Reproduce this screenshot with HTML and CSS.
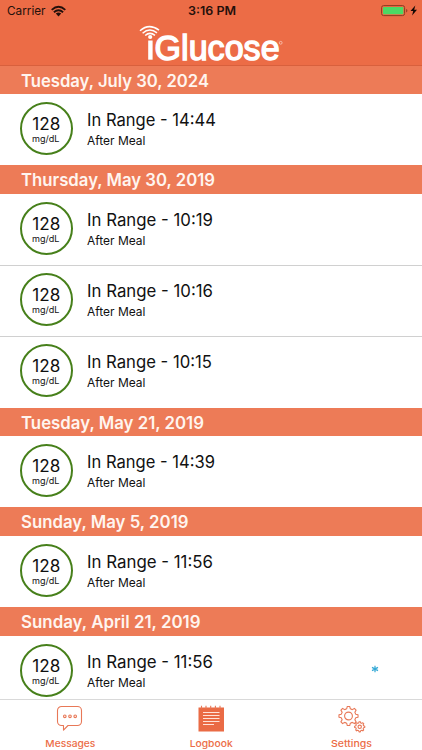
FILE: index.html
```html
<!DOCTYPE html>
<html lang="en">
<head>
<meta charset="utf-8">
<title>iGlucose Logbook</title>
<link rel="stylesheet" href="styles.css">
</head>
<body>
<div class="app">
  <header class="top">
    <div class="status">
      <div class="carrier"><svg class="carrier-text" width="41" height="16"><text x="0" y="12.3" textLength="38.5" lengthAdjust="spacingAndGlyphs">Carrier</text></svg>
        <svg class="wifi" width="15" height="11" viewBox="0 0 15 11"><path d="M.7 3.9Q7.5-2.2 14.3 3.9M2.9 6.2Q7.5 2.2 12.1 6.2" fill="none" stroke="#24100b" stroke-width="1.9"/><path d="M4.8 7.6Q7.5 5.5 10.2 7.6L7.5 10.4Z" fill="#24100b"/></svg>
      </div>
      <svg class="time" width="48" height="16"><text x="0" y="12.3" textLength="48" lengthAdjust="spacingAndGlyphs">3:16 PM</text></svg>
      <svg class="battery" width="38" height="12" viewBox="0 0 38 12"><rect x=".6" y=".6" width="23" height="10" rx="2" fill="none" stroke="#8c3c22"/><rect x="2" y="2" width="20.3" height="7.3" rx=".8" fill="#4cd964"/><path d="M25.2 4q1.2.4 1.2 1.7t-1.2 1.7z" fill="#8c3c22"/><path d="M34.300.6l-4.800 5.500h2.700l-1.100 4.500 4.900-5.800h-2.800z" fill="#110704"/></svg>
    </div>
    <svg class="logo" width="144" height="38" viewBox="0 0 144 38"><g fill="none" stroke="#fff" stroke-width="1.5"><path d="M1 5.700Q10-2.200 20 5.200M3.600 8.200Q10.500 2 18 7.800M6.200 10.500Q10.700 6.300 16 10.300"/></g><circle cx="11.200" cy="12" r="2.100" fill="#fff"/><rect x="9.200" y="15.500" width="4.400" height="19.200" fill="#fff"/><text class="brand" x="15.600" y="34.500" textLength="125" lengthAdjust="spacingAndGlyphs">Glucose</text><circle cx="141.700" cy="17.800" r="1.400" fill="none" stroke="#f9c9b9" stroke-width=".8"/></svg>
  </header>
  <main class="log" id="log"></main>
  <nav class="tabs">
    <a class="tab"><svg width="28" height="28" viewBox="0 0 28 28"><path d="M5.500 1.500h16a4 4 0 0 1 4 4v11a4 4 0 0 1-4 4H12l-4.500 4.700v-4.700h-2a4 4 0 0 1-4-4v-11a4 4 0 0 1 4-4z" class="line"/><g class="line"><circle cx="8.800" cy="11.300" r="1.300"/><circle cx="14" cy="11.300" r="1.300"/><circle cx="19.200" cy="11.300" r="1.300"/></g></svg>
      <svg class="label" width="70" height="16"><text x="35.300" y="12" text-anchor="middle" textLength="50" lengthAdjust="spacingAndGlyphs">Messages</text></svg></a>
    <a class="tab"><svg width="28" height="28" viewBox="0 0 28 28"><rect x="1.500" y="2.500" width="25.500" height="24" fill="#ea6b45"/><path d="M4.500.800v3M9 .800v3M13.700.800v3M18.400.800v3M23 .800v3" class="line"/><path d="M6 7.500h16.500M6 10.500h16.500M6 13.500h16.500M6 16.500h16.500M6 19.500h11" stroke="#ffe2d8" stroke-width="1.200"/></svg>
      <svg class="label" width="70" height="16"><text x="35.200" y="12" text-anchor="middle" textLength="43" lengthAdjust="spacingAndGlyphs">Logbook</text></svg></a>
    <a class="tab"><svg width="28" height="28" viewBox="0 0 28 28"><g id="gears" class="line"><circle cx="10.500" cy="11" r="3.900"/><circle cx="21.700" cy="21.800" r="1.700"/></g></svg>
      <svg class="label" width="70" height="16"><text x="34.500" y="12" text-anchor="middle" textLength="41" lengthAdjust="spacingAndGlyphs">Settings</text></svg></a>
  </nav>
</div>
<script src="app.js"></script>
</body>
</html>
```
FILE: styles.css
```css
* { box-sizing: border-box; }
body { margin: 0; background: #fff; font-family: Inter, "Liberation Sans", sans-serif; }
.app { width: 422px; height: 750px; display: flex; flex-direction: column; overflow: hidden; }
svg { display: block; flex: none; overflow: visible; }
.top { flex: none; height: 65.6px; background: #ec6c46; border-bottom: 1px solid #d8603d; display: flex; flex-direction: column; align-items: center; }
.status { width: 100%; height: 25px; padding: 3px 3px 0 7px; display: grid; grid-template-columns: 1fr 48px 1fr; align-items: start; }
.carrier { display: flex; gap: 3px; }
.wifi { margin-top: 3px; }
.carrier-text, .time { font-size: 12px; fill: #24100b; }
.time { font-weight: 600; margin-left: -1px; }
.battery { justify-self: end; margin-top: 2px; }
.brand { font: 34.500px "Liberation Sans", Arial, sans-serif; fill: #fff; stroke: #fff; stroke-width: 1.400px; }
.log { flex: 1; min-height: 0; overflow: hidden; }
.date { margin: 0; height: 28.6px; padding-left: 21px; background: #ed7b57; }
.date text { font-size: 17px; font-weight: 600; fill: #fff5ef; }
.entry { height: 71.200px; padding-left: 20px; display: flex; align-items: flex-start; position: relative; }
.entry + .entry { border-top: 1.500px solid #d0d0d0; }
.reading { width: 53px; height: 53px; margin-top: 8px; border: 2px solid #47801b; border-radius: 50%; }
.entry + .entry .reading { margin-top: 7px; }
.entry + .entry .info { margin-top: 12px; }
.info { margin: 13px 0 0 14px; }
.value { font-size: 17px; }
.unit { font-size: 9px; }
.title { font-size: 17px; }
.meal { font-size: 12px; }
.entry text { fill: #111; }
.star { position: absolute; left: 371px; top: 29px; }
.tabs { flex: none; height: 51px; border-top: 1px solid #d9d9d9; background: #fff; display: grid; grid-template-columns: 140px 141px 141px; }
.tab { display: flex; flex-direction: column; align-items: center; padding-top: 5px; }
.line { fill: none; stroke: #e87857; stroke-width: 1.100; stroke-linejoin: round; }
.label { margin-top: 2px; font-size: 9.500px; font-weight: 500; fill: #ec6c46; }
```
FILE: app.js
```js
const days = [
  ["Tuesday, July 30, 2024", 188, [["14:44", 129]]],
  ["Thursday, May 30, 2019", 194, [["10:19", 126], ["10:16", 126], ["10:15", 125]]],
  ["Tuesday, May 21, 2019", 183, [["14:39", 128]]],
  ["Sunday, May 5, 2019", 167.5, [["11:56", 126]]],
  ["Sunday, April 21, 2019", 179.5, [["11:56", 126, true]]]
];
const line = (cls, text, x, y, w) =>
  `<text class="${cls}" x="${x}" y="${y}" textLength="${w}" lengthAdjust="spacingAndGlyphs">${text}</text>`;
const entry = ([time, width, starred]) => `<div class="entry">
  <div class="reading"><svg width="49" height="49">${line("value", "128", 10.3, 26.3, 28)}${line("unit", "mg/dL", 10, 38.3, 27.5)}</svg></div>
  <div class="info"><svg width="150" height="42">${line("title", "In Range - " + time, 0, 19, width)}${line("meal", "After Meal", 0, 38, 58.5)}</svg></div>
  ${starred ? '<svg class="star" width="8" height="8" viewBox="0 0 8 8"><path d="M4 .8v6.400M1 2.400l6 3.200M1 5.600l6-3.200" stroke="#35a9d6" stroke-width="1.200"/></svg>' : ""}
</div>`;
document.getElementById("log").innerHTML = days.map(([name, width, entries]) =>
  `<section><h2 class="date"><svg width="250" height="28">${line("", name, 0, 20.7, width)}</svg></h2>${entries.map(entry).join("")}</section>`).join("");

function gear(cx, cy, inner, outer, teeth) {
  const points = [];
  const step = Math.PI * 2 / teeth;
  for (let i = 0; i < teeth; i++) {
    for (const [offset, r] of [[-.32, inner], [-.16, outer], [.16, outer], [.32, inner]]) {
      const a = (i + offset) * step - Math.PI / 2;
      points.push(`${cx + Math.cos(a) * r},${cy + Math.sin(a) * r}`);
    }
  }
  return `<polygon points="${points.join(" ")}"/>`;
}
document.getElementById("gears").innerHTML += gear(10.5, 11, 7.4, 9.6, 8) + gear(21.7, 21.8, 4, 5.1, 8);
```
